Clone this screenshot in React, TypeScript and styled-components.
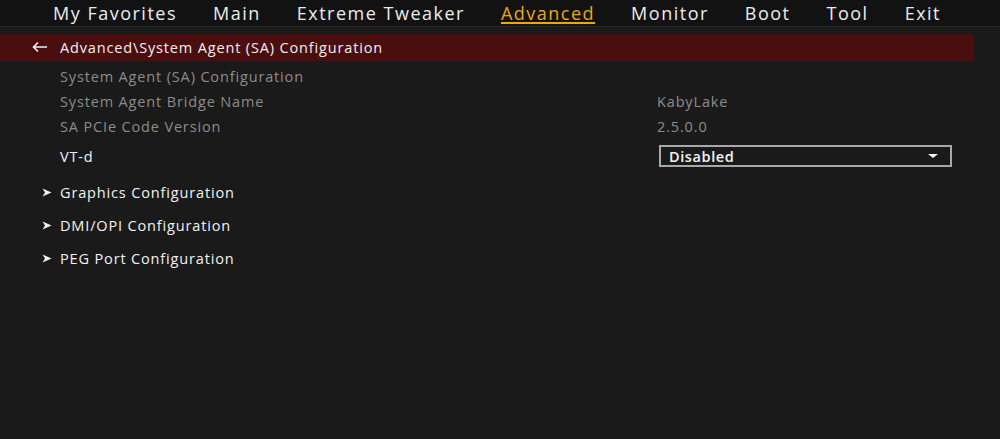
import React from "react";
import styled, { createGlobalStyle } from "styled-components";

const Global = createGlobalStyle`
  html, body { margin: 0; padding: 0; background: #1a1a1a; }
  body { font-family: "Open Sans", "Noto Sans", sans-serif; }
  #root { width: 1000px; height: 439px; overflow: hidden; }
`;

const Page = styled.div`
  width: 1000px;
  height: 439px;
  background: #1a1a1a;
  display: flex;
  flex-direction: column;
`;

const TabBar = styled.nav`
  height: 26px;
  background: #121212;
  border-bottom: 1px solid #2c2c2c;
  display: flex;
  align-items: center;
  padding-left: 53px;
  gap: 36px;
`;

const Tab = styled.span<{ $active?: boolean }>`
  font-size: 18px;
  line-height: 26px;
  color: ${(p) => (p.$active ? "#e9a90c" : "#ececec")};
  text-decoration: ${(p) => (p.$active ? "underline" : "none")};
  text-underline-offset: 2px;
  text-decoration-thickness: 2px;
  letter-spacing: 1.5px;
`;

const Content = styled.div`
  padding-top: 7px;
  display: flex;
  flex-direction: column;
`;

const Crumb = styled.div`
  width: 974px;
  height: 27px;
  background: #4b0e0f;
  display: flex;
  align-items: center;
  padding-left: 32px;
  padding-bottom: 1px;
  box-sizing: border-box;
  gap: 12px;
  color: #f0f0f0;
  font-size: 14.5px;
  letter-spacing: 0.85px;
`;

const List = styled.div`
  padding-left: 60px;
  padding-top: 2px;
  display: flex;
  flex-direction: column;
  font-size: 14.5px;
  letter-spacing: 0.85px;
`;

const Row = styled.div<{ $h: number }>`
  height: ${(p) => p.$h}px;
  display: flex;
  align-items: center;
`;

const Label = styled.span<{ $dim?: boolean }>`
  width: 597px;
  flex-shrink: 0;
  color: ${(p) => (p.$dim ? "#8c8c8c" : "#f2f2f2")};
`;

const Value = styled.span`
  color: #8c8c8c;
`;

const Select = styled.div`
  width: 293px;
  height: 22px;
  box-sizing: border-box;
  border: 2px solid #a8a8a8;
  margin-left: 2px;
  display: flex;
  align-items: center;
  justify-content: space-between;
  padding: 0 12px 0 8px;
  color: #f4f4f4;
  font-weight: 600;
  letter-spacing: 0.6px;
`;

const Caret = styled.span`
  width: 0;
  height: 0;
  border-left: 5px solid transparent;
  border-right: 5px solid transparent;
  border-top: 4px solid #f4f4f4;
`;

const SubList = styled.div`
  margin-top: 3px;
  margin-left: -18px;
  display: flex;
  flex-direction: column;
`;

const Sub = styled.div`
  height: 33px;
  display: flex;
  align-items: center;
  gap: 8px;
  color: #f2f2f2;
`;

const Arrow = () => (
  <svg width="16" height="12" viewBox="0 0 16 12">
    <path d="M15 6H2M6 1.5L1.5 6L6 10.5" stroke="#f0f0f0" strokeWidth="1.6" fill="none" />
  </svg>
);

const Chevron = () => (
  <svg width="10" height="9" viewBox="0 0 10 9">
    <path d="M0.5 0.5L9.5 4.5L0.5 8.5L3 4.5Z" fill="#f0f0f0" />
  </svg>
);

const tabs = ["My Favorites", "Main", "Extreme Tweaker", "Advanced", "Monitor", "Boot", "Tool", "Exit"];
const subs = ["Graphics Configuration", "DMI/OPI Configuration", "PEG Port Configuration"];

export default function App() {
  return (
    <Page>
      <Global />
      <TabBar>
        {tabs.map((t) => (
          <Tab key={t} $active={t === "Advanced"}>{t}</Tab>
        ))}
      </TabBar>
      <Content>
        <Crumb>
          <Arrow />
          <span>Advanced\System Agent (SA) Configuration</span>
        </Crumb>
        <List>
          <Row $h={26}><Label $dim>System Agent (SA) Configuration</Label></Row>
          <Row $h={25}><Label $dim>System Agent Bridge Name</Label><Value>KabyLake</Value></Row>
          <Row $h={25}><Label $dim>SA PCIe Code Version</Label><Value>2.5.0.0</Value></Row>
          <Row $h={34}>
            <Label>VT-d</Label>
            <Select><span>Disabled</span><Caret /></Select>
          </Row>
          <SubList>
            {subs.map((s) => (
              <Sub key={s}><Chevron /><span>{s}</span></Sub>
            ))}
          </SubList>
        </List>
      </Content>
    </Page>
  );
}
